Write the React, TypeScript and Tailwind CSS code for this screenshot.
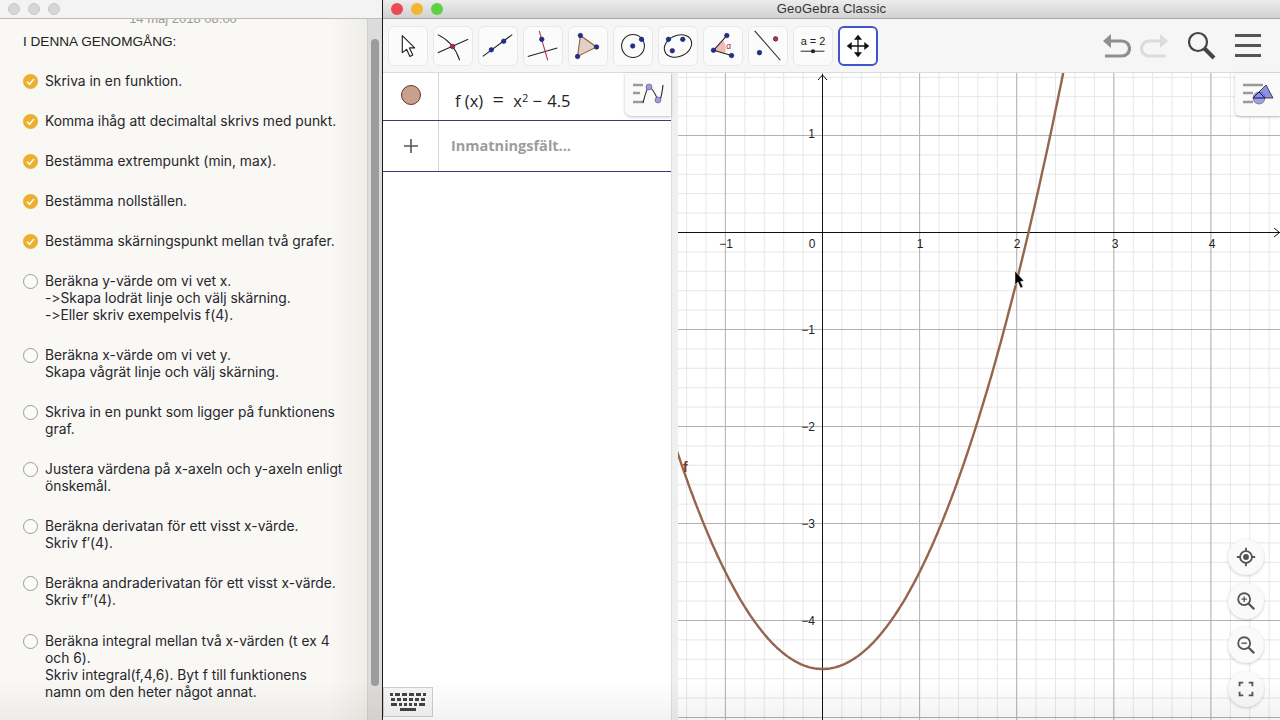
import React from 'react';

const notes: { done: boolean; lines: string[] }[] = [
  { done: true, lines: ['Skriva in en funktion.'] },
  { done: true, lines: ['Komma ihåg att decimaltal skrivs med punkt.'] },
  { done: true, lines: ['Bestämma extrempunkt (min, max).'] },
  { done: true, lines: ['Bestämma nollställen.'] },
  { done: true, lines: ['Bestämma skärningspunkt mellan två grafer.'] },
  { done: false, lines: ['Beräkna y-värde om vi vet x.', '->Skapa lodrät linje och välj skärning.', '->Eller skriv exempelvis f(4).'] },
  { done: false, lines: ['Beräkna x-värde om vi vet y.', 'Skapa vågrät linje och välj skärning.'] },
  { done: false, lines: ['Skriva in en punkt som ligger på funktionens', 'graf.'] },
  { done: false, lines: ['Justera värdena på x-axeln och y-axeln enligt', 'önskemål.'] },
  { done: false, lines: ['Beräkna derivatan för ett visst x-värde.', 'Skriv f′(4).'] },
  { done: false, lines: ['Beräkna andraderivatan för ett visst x-värde.', 'Skriv f′′(4).'] },
  { done: false, lines: ['Beräkna integral mellan två x-värden (t ex 4', 'och 6).', 'Skriv integral(f,4,6). Byt f till funktionens', 'namn om den heter något annat.'] },
];

const BLUE = '#1c2f9e';

function Dot({ x, y, c = BLUE, r = 2.4 }: { x: number; y: number; c?: string; r?: number }) {
  return <circle cx={x} cy={y} r={r} fill={c} stroke="#1a1a40" strokeWidth={0.6} />;
}

// toolbar icons, 40x40
const tools: React.ReactNode[] = [
  <path key="a" d="M14 9 L14 27 L18.5 23.5 L22 31 L25 29.5 L21.5 22 L27 22 Z" fill="#fff" stroke="#222" strokeWidth={1.2} strokeLinejoin="round" />,
  <g key="b" fill="none" stroke="#222" strokeWidth={1.1}>
    <path d="M4 27 L36 13" />
    <path d="M4 8 Q21 16 27 35" />
    <Dot x={19.5} y={20.5} c="#c0263a" />
  </g>,
  <g key="c" fill="none" stroke="#222" strokeWidth={1.1}>
    <path d="M4 31 L35 8" />
    <Dot x={13} y={24} />
    <Dot x={26} y={15} />
  </g>,
  <g key="d" fill="none" stroke="#222" strokeWidth={1.1}>
    <path d="M4 31 L35 22" />
    <path d="M16 4 L25 35" stroke="#b8304a" />
    <Dot x={18.7} y={13} />
  </g>,
  <g key="e">
    <path d="M12 9 L29 21 L9 31 Z" fill="#e3cfc4" stroke="#8c5a40" strokeWidth={1.1} />
    <Dot x={12} y={9} />
    <Dot x={29} y={21} />
    <Dot x={9} y={31} />
  </g>,
  <g key="f">
    <circle cx={20} cy={20} r={12} fill="none" stroke="#222" strokeWidth={1.1} />
    <Dot x={19.7} y={20} />
    <Dot x={29} y={13} />
  </g>,
  <g key="g">
    <ellipse cx={20} cy={20} rx={15} ry={11} transform="rotate(-25 20 20)" fill="none" stroke="#222" strokeWidth={1.1} />
    <Dot x={10} y={13} />
    <Dot x={14} y={25} />
    <Dot x={25} y={13} />
  </g>,
  <g key="h">
    <path d="M10 24.5 L20 14 A14 14 0 0 1 22 27.5 Z" fill="#f0b9b5" />
    <path d="M10 24.5 L24 9 M10 24.5 L29 30" stroke="#222" strokeWidth={1.1} />
    <Dot x={10} y={24.5} />
    <Dot x={24} y={9} />
    <Dot x={29} y={30} />
    <text x={23.5} y={23} fontSize={9} fill="#a8323e" fontFamily="'Liberation Sans', sans-serif">α</text>
  </g>,
  <g key="i">
    <path d="M6 4 L33 35" stroke="#222" strokeWidth={1.1} />
    <Dot x={28} y={12.5} c="#b8304a" />
    <Dot x={11} y={27} />
  </g>,
  <g key="j">
    <text x={20} y={19} fontSize={11.5} textAnchor="middle" fill="#222" fontFamily="'Liberation Sans', sans-serif">a = 2</text>
    <path d="M7 25.5 L32 25.5" stroke="#444" strokeWidth={1.2} />
    <circle cx={20} cy={25.5} r={2.2} fill="#222" />
  </g>,
  <g key="k" fill="#111">
    <path d="M20 9 L20 31 M9 20 L31 20" stroke="#111" strokeWidth={1.4} />
    <path d="M20 7.5 L24.5 13 L15.5 13 Z M20 32.5 L24.5 27 L15.5 27 Z M7.5 20 L13 15.5 L13 24.5 Z M32.5 20 L27 15.5 L27 24.5 Z" />
  </g>,
];

const X0 = 822.5;
const Y0 = 232.5;
const UX = 97.1;
const UY = 97;

function Graph() {
  const minorX: number[] = [];
  const minorY: number[] = [];
  for (let i = -8; i <= 24; i++) minorX.push(X0 + (i * UX) / 5);
  for (let i = -10; i <= 26; i++) minorY.push(Y0 + (i * UY) / 5);
  const majorX = [-1, 0, 1, 2, 3, 4].map((k) => X0 + k * UX);
  const majorY = [1, -1, -2, -3, -4, -5].map((k) => Y0 - k * UY);

  let curve = '';
  for (let x = -1.5; x <= 2.6; x += 0.02) {
    const px = X0 + x * UX;
    const py = Y0 - (x * x - 4.5) * UY;
    curve += `${curve ? 'L' : 'M'}${px.toFixed(1)} ${py.toFixed(1)} `;
  }

  const font = "'Liberation Sans', sans-serif";
  return (
    <svg viewBox="678 73 602 647" className="block w-full h-full">
      <rect x={678} y={73} width={602} height={647} fill="#fff" />
      {minorX.map((x) => <line key={x} x1={x} x2={x} y1={73} y2={720} stroke="#e6e6e6" strokeWidth={1} />)}
      {minorY.map((y) => <line key={y} x1={678} x2={1280} y1={y} y2={y} stroke="#e6e6e6" strokeWidth={1} />)}
      {majorX.map((x) => <line key={x} x1={x} x2={x} y1={73} y2={720} stroke="#b2b2b2" strokeWidth={1} />)}
      {majorY.map((y) => <line key={y} x1={678} x2={1280} y1={y} y2={y} stroke="#b2b2b2" strokeWidth={1} />)}
      <line x1={678} x2={1280} y1={Y0} y2={Y0} stroke="#111" strokeWidth={1} />
      <line x1={X0} x2={X0} y1={74} y2={720} stroke="#111" strokeWidth={1} />
      <path d="M818 80 L822.5 75 L827 80" fill="none" stroke="#111" strokeWidth={1} />
      <path d="M1274 228 L1279.5 232.5 L1274 237" fill="none" stroke="#111" strokeWidth={1} />
      <path d={curve} fill="none" stroke="#96654f" strokeWidth={2.4} />
      <g fontFamily={font} fontSize={12} fill="#222">
        <text x={726} y={248} textAnchor="middle">−1</text>
        <text x={812} y={248} textAnchor="middle">0</text>
        <text x={920} y={248} textAnchor="middle">1</text>
        <text x={1017} y={248} textAnchor="middle">2</text>
        <text x={1115} y={248} textAnchor="middle">3</text>
        <text x={1212} y={248} textAnchor="middle">4</text>
        <text x={815} y={138} textAnchor="end">1</text>
        <text x={815} y={334} textAnchor="end">−1</text>
        <text x={815} y={431} textAnchor="end">−2</text>
        <text x={815} y={528} textAnchor="end">−3</text>
        <text x={815} y={625} textAnchor="end">−4</text>
      </g>
      <text x={683} y={472} fontFamily={font} fontSize={14} fontWeight={700} fill="#7a3a20">f</text>
      <path d="M1015 271 L1015 285 L1018 282 L1020.5 288 L1023 287 L1020.5 281.5 L1024 281 Z" fill="#000" stroke="#fff" strokeWidth={0.5} />
    </svg>
  );
}

function RoundBtn({ children }: { children: React.ReactNode }) {
  return (
    <div className="w-[36px] h-[36px] rounded-full bg-[#fafafa] shadow-[0_1px_3px_rgba(0,0,0,0.2)] flex items-center justify-center">
      <svg viewBox="0 0 24 24" className="w-[22px] h-[22px]" fill="none" stroke="#555" strokeWidth={2}>
        {children}
      </svg>
    </div>
  );
}

export default function App() {
  return (
    <div className="relative flex w-[1280px] h-[720px] overflow-hidden bg-white font-['Liberation_Sans',sans-serif]">
      {/* anteckningar */}
      <div className="w-[382px] h-full flex flex-col bg-[#f8f7f2] shrink-0">
        <div className="h-[19px] shrink-0 flex items-center gap-[8px] pl-[8px] bg-[#f3f3f3] border-b border-[#bdbdbd]">
          <div className="w-[12px] h-[12px] rounded-full bg-[#d6d6d6] border border-[#c8c8c8]" />
          <div className="w-[12px] h-[12px] rounded-full bg-[#d6d6d6] border border-[#c8c8c8]" />
          <div className="w-[12px] h-[12px] rounded-full bg-[#d6d6d6] border border-[#c8c8c8]" />
        </div>
        <div className="flex-1 flex overflow-hidden">
          <div className="flex-1 overflow-hidden relative pl-[23px] pr-[12px] bg-gradient-to-r from-[#f9f8f4] from-90% to-[#eeede8]">
            <div className="h-[14px] -mt-[7px] text-center text-[13px] leading-[14px] text-[#9a9a9a] pr-[12px]">14 maj 2018 08:00</div>
            <div className="mt-[7px] text-[13.6px] leading-[17px] text-[#222] mb-[23px]">I DENNA GENOMGÅNG:</div>
            {notes.map((n, i) => (
              <div key={i} className="flex mb-[23.06px] text-[13.8px] leading-[17px] text-[#26262e] font-['Inter',sans-serif] [font-variant-ligatures:none] [font-feature-settings:'calt'_0]">
                <div className="w-[22px] shrink-0 pt-[1px]">
                  {n.done ? (
                    <svg viewBox="0 0 15 15" className="w-[15px] h-[15px]">
                      <circle cx={7.5} cy={7.5} r={7.5} fill="#ecb02f" />
                      <path d="M4 7.8 L6.5 10.2 L11 5" fill="none" stroke="#fff" strokeWidth={1.5} />
                    </svg>
                  ) : (
                    <div className="w-[15px] h-[15px] rounded-full border border-[#9b9b9b] bg-[#fbfbf8]" />
                  )}
                </div>
                <div className="whitespace-nowrap">
                  {n.lines.map((l) => <div key={l}>{l}</div>)}
                </div>
              </div>
            ))}
          </div>
          <div className="w-[15px] shrink-0 bg-[#dddcda] border-l border-[#cfcfcf] pt-[20px] pl-[3px]">
            <div className="w-[8px] h-[647px] rounded-full bg-[#9c9c9c]" />
          </div>
        </div>
      </div>

      {/* GeoGebra */}
      <div className="flex-1 h-full flex flex-col border-l border-[#1a1a1a] min-w-0">
        <div className="relative h-[19px] shrink-0 flex items-center justify-center gap-0 bg-gradient-to-b from-[#ececec] to-[#d2d2d2] border-b border-[#a8a8a8]">
          <div className="absolute left-[8px] top-[3px] flex gap-[8px]">
            <div className="w-[12px] h-[12px] rounded-full bg-[#ec4a52]" />
            <div className="w-[12px] h-[12px] rounded-full bg-[#f4b62f]" />
            <div className="w-[12px] h-[12px] rounded-full bg-[#5fcf44]" />
          </div>
          <span className="text-[13px] tracking-[0.2px] text-[#333]">GeoGebra Classic</span>
        </div>

        <div className="h-[54px] shrink-0 flex items-center bg-[#f6f6f6] border-b border-[#dcdcdc] pl-[5px] pr-[19px]">
          <div className="flex gap-[5px]">
            {tools.map((t, i) => (
              <div
                key={i}
                className={i === 10
                  ? 'w-[40px] h-[40px] rounded-[6px] bg-white border-2 border-[#3f55c9]'
                  : 'w-[40px] h-[40px] rounded-[6px] bg-[#fbfbfb] border border-[#e8e8e8]'}
              >
                <svg viewBox="0 0 40 40" className="w-full h-full">{t}</svg>
              </div>
            ))}
          </div>
          <div className="ml-auto flex items-center">
            <svg viewBox="0 0 28 26" className="w-[28px] h-[26px]" fill="none">
              <path d="M6 8 H19 A7.5 7.5 0 0 1 19 23 H2" stroke="#8f8f8f" strokeWidth={3.2} />
              <path d="M8 1 L0 8 L8 15 Z" fill="#8f8f8f" />
            </svg>
            <svg viewBox="0 0 28 26" className="w-[28px] h-[26px] ml-[9px]" fill="none">
              <path d="M22 8 H9 A7.5 7.5 0 0 0 9 23 H26" stroke="#dcdcdc" strokeWidth={3.2} />
              <path d="M20 1 L28 8 L20 15 Z" fill="#dcdcdc" />
            </svg>
            <svg viewBox="0 0 30 30" className="w-[30px] h-[30px] ml-[19px]" fill="none" stroke="#444">
              <circle cx={11} cy={11} r={9} strokeWidth={2.2} />
              <path d="M17.5 17.5 L27 27" strokeWidth={4} />
            </svg>
            <div className="ml-[18px] w-[26px] flex flex-col gap-[7px]">
              <div className="h-[3px] bg-[#555]" />
              <div className="h-[3px] bg-[#555]" />
              <div className="h-[3px] bg-[#555]" />
            </div>
          </div>
        </div>

        <div className="flex-1 flex min-h-0">
          {/* algebra */}
          <div className="relative w-[288px] shrink-0 bg-white">
            <div className="h-[48px] flex border-b border-[#3d3a78]">
              <div className="w-[56px] flex items-center justify-center border-r border-[#d4d4d4] pb-[3px]">
                <div className="w-[20px] h-[20px] rounded-full bg-[#c8a08c] border border-[#5a3a2a]" />
              </div>
              <div className="pl-[16px] pt-[17px] text-[16.5px] leading-[20px] text-[#222] font-['Open_Sans',sans-serif] whitespace-nowrap">
                f (x) <span className="mx-[5px] text-[20px]">=</span> x<sup className="text-[11px]">2</sup> <span className="mr-[1px]">−</span> 4.5
              </div>
            </div>
            <div className="h-[51px] flex border-b border-[#3d3a78]">
              <div className="w-[56px] flex items-center justify-center border-r border-[#d4d4d4]">
                <svg viewBox="0 0 16 16" className="w-[16px] h-[16px]" stroke="#555" strokeWidth={1.6}>
                  <path d="M8 1 V15 M1 8 H15" />
                </svg>
              </div>
              <div className="pl-[12px] pt-[14px] text-[14.5px] leading-[22px] font-bold text-[#9c9c9c] font-['Open_Sans',sans-serif]">Inmatningsfält...</div>
            </div>
            <div className="absolute right-0 top-0 w-[46px] h-[43px] bg-[#fafafa] rounded-bl-[6px] shadow-[0_1px_3px_rgba(0,0,0,0.25)]">
              <svg viewBox="0 0 46 43" className="w-full h-full">
                <path d="M8 12 H18 M8 20 H15 M8 29 H18" stroke="#9a9a9a" strokeWidth={2.4} />
                <path d="M18 30 Q22 14 24 14 Q27 14 33 27 Q36 30 38 12" fill="none" stroke="#333" strokeWidth={1.2} />
                <circle cx={24} cy={14} r={3} fill="#9a9ae8" stroke="#444" strokeWidth={0.5} />
                <circle cx={33} cy={27} r={3} fill="#9a9ae8" stroke="#444" strokeWidth={0.5} />
              </svg>
            </div>
            <div className="absolute left-0 bottom-[3px] w-[50px] h-[30px] bg-[#f6f6f6] border border-[#cfcfcf] flex flex-col items-center justify-center gap-[2px]">
              <div className="flex gap-[2px]">
                {[3, 5, 5, 5, 5, 3].map((w, i) => <div key={i} className="h-[3px] bg-[#444]" style={{ width: w }} />)}
              </div>
              <div className="flex gap-[2px]">
                {[4, 4, 4, 4, 4, 4].map((w, i) => <div key={i} className="h-[3px] bg-[#444]" style={{ width: w }} />)}
              </div>
              <div className="flex gap-[2px]">
                {[6, 3, 3, 3, 3, 6].map((w, i) => <div key={i} className="h-[3px] bg-[#444]" style={{ width: w }} />)}
              </div>
              <div className="w-[16px] h-[3px] bg-[#444]" />
            </div>
          </div>

          <div className="w-[7px] shrink-0 bg-[#efefef] border-l border-[#dddddd]" />

          {/* ritområde */}
          <div className="relative flex-1 min-w-0">
            <Graph />
            <div className="absolute right-0 top-0 w-[45px] h-[43px] bg-[#fafafa] rounded-bl-[6px] shadow-[0_1px_3px_rgba(0,0,0,0.25)]">
              <svg viewBox="0 0 45 43" className="w-full h-full">
                <path d="M8 12 H28 M8 20 H18 M8 29 H18" stroke="#9a9a9a" strokeWidth={2.4} />
                <path d="M31 12 L38 25 L18 25 Z" fill="#8f8fe6" stroke="#222" strokeWidth={0.8} />
                <circle cx={24} cy={25} r={6} fill="#8f8fe6" fillOpacity={0.85} stroke="#555" strokeWidth={0.6} />
                <path d="M24 19 L30 25 L18 25 Z" fill="none" stroke="#1a1a60" strokeWidth={1} />
              </svg>
            </div>
            <div className="absolute right-[16px] bottom-[13px] flex flex-col gap-[8px]">
              <RoundBtn>
                <circle cx={12} cy={12} r={6.5} />
                <circle cx={12} cy={12} r={3.2} fill="#555" stroke="none" />
                <path d="M12 2 V5.5 M12 18.5 V22 M2 12 H5.5 M18.5 12 H22" />
              </RoundBtn>
              <RoundBtn>
                <circle cx={10} cy={10} r={6.5} />
                <path d="M15 15 L21 21" strokeWidth={2.6} />
                <path d="M7 10 H13 M10 7 V13" strokeWidth={1.5} />
              </RoundBtn>
              <RoundBtn>
                <circle cx={10} cy={10} r={6.5} />
                <path d="M15 15 L21 21" strokeWidth={2.6} />
                <path d="M7 10 H13" strokeWidth={1.5} />
              </RoundBtn>
              <RoundBtn>
                <path d="M5 9 V5 H9 M15 5 H19 V9 M19 15 V19 H15 M9 19 H5 V15" />
              </RoundBtn>
            </div>
          </div>
        </div>
      </div>
      <div className="absolute inset-x-0 bottom-0 h-[40px] pointer-events-none bg-gradient-to-b from-transparent to-black/5" />
    </div>
  );
}
